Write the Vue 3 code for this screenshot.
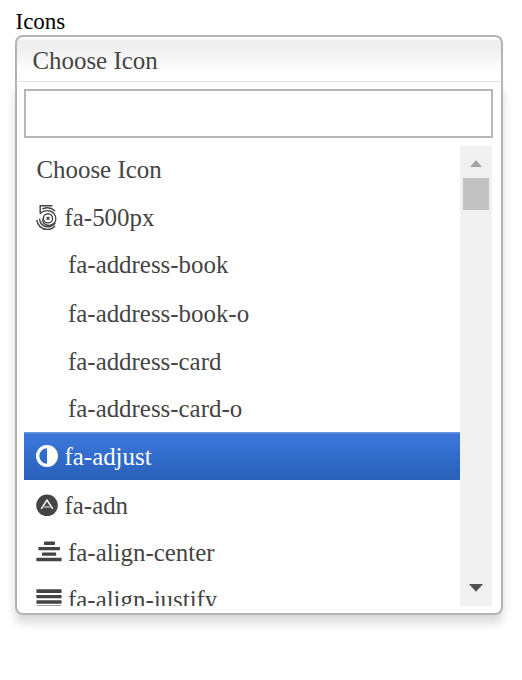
<script setup>
import { ref } from 'vue'

const query = ref('')
const options = [
  { label: 'Choose Icon', icon: 'none' },
  { label: 'fa-500px', icon: 'px500' },
  { label: 'fa-address-book', icon: 'blank' },
  { label: 'fa-address-book-o', icon: 'blank' },
  { label: 'fa-address-card', icon: 'blank' },
  { label: 'fa-address-card-o', icon: 'blank' },
  { label: 'fa-adjust', icon: 'adjust' },
  { label: 'fa-adn', icon: 'adn' },
  { label: 'fa-align-center', icon: 'center' },
  { label: 'fa-align-justify', icon: 'justify' },
]
const selected = ref('fa-adjust')
</script>

<template>
  <div class="page">
    <div class="caption">Icons</div>
    <div class="select">
      <div class="head">Choose Icon</div>
      <div class="drop">
        <div class="search"><input v-model="query" type="text" /></div>
        <div class="results">
          <div class="list">
            <div
              v-for="o in options"
              :key="o.label"
              class="row"
              :class="{ on: o.label === selected }"
              @mouseenter="selected = o.label"
            >
              <span v-if="o.icon !== 'none'" class="icon" :class="o.icon">
                <svg v-if="o.icon === 'px500'" width="22" height="26" viewBox="0 0 22 26" fill="none" stroke="currentColor" stroke-width="1.4">
                  <path d="M16.5 .8H4.2V8.4" />
                  <path d="M6.5 4C10.5 2.2 15.5 2.8 19 6" />
                  <path d="M4 8.4C8 4.6 14.8 4.8 18 8.6C21 12.4 20.2 17 17 19.2C13.6 21.4 9 20.4 7 17.2V13.4" />
                  <circle cx="12" cy="13.3" r="4.6" />
                  <path d="M10.6 11.9l2.8 2.8M13.4 11.9l-2.8 2.8" />
                  <path d="M3.4 13.6C4 19.2 7.8 22 11.8 21.8C15 21.6 17.6 20.4 19.4 17.8" />
                  <path d="M.7 14.8C1.4 20.8 6 24.4 11.2 24.4C14.6 24.4 17.2 23.2 19 21" />
                </svg>
                <svg v-else-if="o.icon === 'adjust'" width="22" height="26" viewBox="0 0 22 26">
                  <path fill="currentColor" fill-rule="evenodd" d="M11 2a11 11 0 1 0 0 22a11 11 0 0 0 0-22zM11 5.3v15.4a7.7 7.7 0 0 1 0-15.4z" />
                </svg>
                <svg v-else-if="o.icon === 'adn'" width="22" height="26" viewBox="0 0 22 26">
                  <circle cx="11" cy="12.3" r="10.8" fill="currentColor" />
                  <path d="M5.2 15.8L11 7.2l5.8 8.6" fill="none" stroke="#fff" stroke-width="1.5" />
                  <path d="M8.7 12.8h4.6l1.5 2.2H7.2z" fill="#999" />
                </svg>
                <svg v-else-if="o.icon === 'center'" width="26" height="26" viewBox="0 0 26 26" fill="currentColor">
                  <rect x="8" y="1.5" width="11" height="3.5" rx=".7" />
                  <rect x="2.3" y="7" width="21.7" height="3.3" rx=".7" />
                  <rect x="6" y="12.4" width="14.2" height="3.4" rx=".7" />
                  <rect x=".3" y="17.8" width="25.3" height="3.4" rx=".7" />
                </svg>
                <svg v-else-if="o.icon === 'justify'" width="26" height="26" viewBox="0 0 26 26" fill="currentColor">
                  <rect x=".4" y="2.2" width="25.2" height="3.7" rx=".7" />
                  <rect x=".4" y="7.9" width="25.2" height="3.3" rx=".7" />
                  <rect x=".4" y="13.3" width="25.2" height="3.4" rx=".7" />
                  <rect x=".4" y="18.5" width="25.2" height="3.4" rx=".7" />
                </svg>
              </span>
              <span>{{ o.label }}</span>
            </div>
          </div>
          <div class="bar">
            <svg class="arrow" width="32" height="32" viewBox="0 0 32 32"><path d="M10 21L16 14L22 21z" fill="#a3a3a3" /></svg>
            <div class="thumb"></div>
            <svg class="arrow down" width="32" height="32" viewBox="0 0 32 32"><path d="M9 10H23L16 17.8z" fill="#505050" /></svg>
          </div>
        </div>
      </div>
    </div>
  </div>
</template>

<style>
body { background: #fff; }
</style>

<style scoped>
.page {
  box-sizing: border-box;
  width: 522px;
  height: 680px;
  padding: 8px 19px 0 15px;
  font-family: "Liberation Serif", "Times New Roman", serif;
  color: #444;
  overflow: hidden;
}
.caption {
  height: 27px;
  padding-left: .5px;
  line-height: 27px;
  font-size: 23px;
  color: #000;
}
.select {
  width: 488px;
}
.head {
  position: relative;
  z-index: 1;
  box-sizing: border-box;
  height: 47px;
  padding-left: 15.5px;
  line-height: 47px;
  font-size: 24.9px;
  border: 2px solid #b4b4b4;
  border-bottom: 1px solid #e4e4e4;
  border-radius: 8px 8px 0 0;
  background: linear-gradient(#fff 0, #fff 2px, #eee 3px, #eee 20%, #fff 80%);
}
.drop {
  box-sizing: border-box;
  height: 533px;
  border: 2px solid #b4b4b4;
  border-top: 0;
  border-radius: 0 0 8px 8px;
  background: #fff;
  box-shadow: 0 8px 10px rgba(0, 0, 0, .15);
}
.search { padding: 7px 8px 0 7px; }
.search input {
  display: block;
  box-sizing: border-box;
  width: 469px;
  height: 49px;
  padding: 4px 8px;
  border: 2px solid #b6b6b6;
  outline: 0;
  background: #fff;
  font: 25px "Liberation Serif", serif;
}
.results {
  display: flex;
  height: 460px;
  margin: 8px 9px 0 7px;
}
.list {
  flex: 1;
  overflow: hidden;
}
.row {
  display: flex;
  box-sizing: border-box;
  height: 48px;
  padding-left: 12.5px;
  line-height: 48px;
  font-size: 24.9px;
  white-space: nowrap;
}
.row:nth-child(2), .row:nth-child(5), .row:nth-child(6), .row:nth-child(8), .row:nth-child(9) { height: 47px; }
.row:nth-child(3) { height: 49px; }
.row.on {
  margin-bottom: 2px;
  line-height: 50px;
  color: #fff;
  background: linear-gradient(#7da3e2 0, #3875d7 2px, #3875d7 20%, #2a62bc 90%);
}
.icon {
  display: flex;
  width: 22.5px;
  height: 48px;
  align-items: center;
  margin-left: -.5px;
  margin-right: 6px;
}
.icon.blank { width: 26px; }
.icon.center, .icon.justify { width: 26px; }
.icon svg { flex: none; }
.bar {
  display: flex;
  flex-direction: column;
  width: 32px;
  background: #f0f0f0;
}
.arrow { display: block; }
.thumb {
  width: 26px;
  height: 32px;
  margin: 0 3px;
  background: #c1c1c1;
}
.down { margin-top: auto; }
</style>
